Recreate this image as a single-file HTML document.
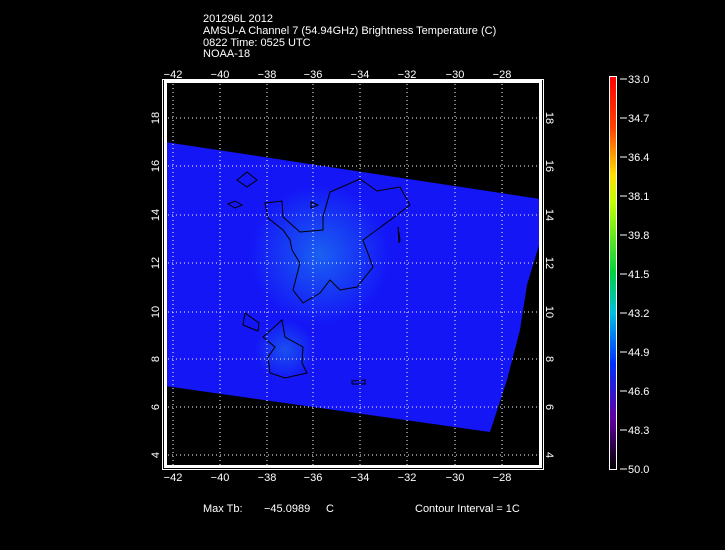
<!DOCTYPE html>
<html><head><style>
html,body{margin:0;padding:0;background:#000;}
svg{display:block;}
text{font-family:"Liberation Sans",sans-serif;fill:#fff;font-size:11px;}
</style></head><body>
<svg width="725" height="550" viewBox="0 0 725 550" xmlns="http://www.w3.org/2000/svg">
<defs>
<radialGradient id="hot" cx="320" cy="255" r="70" gradientUnits="userSpaceOnUse">
<stop offset="0" stop-color="#1a60f2"/><stop offset="1" stop-color="#1a60f2" stop-opacity="0"/>
</radialGradient>
<radialGradient id="hot2" cx="285" cy="350" r="30" gradientUnits="userSpaceOnUse">
<stop offset="0" stop-color="#1a50f0"/><stop offset="1" stop-color="#1a50f0" stop-opacity="0"/>
</radialGradient>
<linearGradient id="cb" x1="0" y1="0" x2="0" y2="1">
<stop offset="0" stop-color="#ff0000"/>
<stop offset="0.13" stop-color="#ff4000"/>
<stop offset="0.25" stop-color="#ffe000"/>
<stop offset="0.32" stop-color="#c0ff00"/>
<stop offset="0.5" stop-color="#00d040"/>
<stop offset="0.6" stop-color="#00c0e0"/>
<stop offset="0.73" stop-color="#0030ff"/>
<stop offset="0.87" stop-color="#6000a0"/>
<stop offset="1" stop-color="#000000"/>
</linearGradient>
</defs>
<text x="203" y="22">201296L 2012</text>
<text x="203" y="34">AMSU-A Channel 7 (54.94GHz) Brightness Temperature (C)</text>
<text x="203" y="46">0822 Time: 0525 UTC</text>
<text x="203" y="57">NOAA-18</text>
<polygon points="165,142 540,199 540,242 527,285 520,330 507,380 490,432 165,386" fill="#1416f6"/>
<polygon points="165,142 540,199 540,242 527,285 520,330 507,380 490,432 165,386" fill="url(#hot)"/>
<polygon points="165,142 540,199 540,242 527,285 520,330 507,380 490,432 165,386" fill="url(#hot2)"/>
<g fill="none" stroke="#000" stroke-width="1">
<path d="M330,192 360,179 377,191 400,187 410,205 393,218 363,240 373,267 357,287 340,290 330,280 320,293 303,303 293,290 300,263 292,250 290,240 283,230 268,218 265,203 282,201 283,217 300,232 323,230 323,217 Z"/>
<path d="M282,320 285,337 303,347 302,363 307,373 285,378 270,373 268,357 275,347 263,337 Z"/>
<path d="M245,313 259,323 258,331 243,325 Z"/>
<path d="M237,180 247,172 257,180 247,187 Z"/>
<path d="M228,204 235,201 242,205 235,208 Z"/>
<path d="M398,227 400,240 399,243 Z"/>
<path d="M352,381 365,380 365,384 352,384 Z"/>
<path d="M311,202 318,205 311,208 Z"/>
</g>
<g stroke="#fff" stroke-width="1" stroke-dasharray="1,3">
<path d="M173,80V465M220,80V465M267,80V465M313,80V465M360,80V465M407,80V465M455,80V465M502,80V465"/>
<path d="M164,118H541M164,166H541M164,215H541M164,263H541M164,312H541M164,359H541M164,407H541M164,455H541"/>
</g>
<rect x="162.5" y="79.5" width="381" height="390" fill="none" stroke="#fff"/>
<rect x="164" y="80" width="377" height="3" fill="#fff"/>
<rect x="164" y="465" width="377" height="3" fill="#fff"/>
<rect x="164" y="80" width="3" height="388" fill="#fff"/>
<rect x="539" y="80" width="3" height="388" fill="#fff"/>
<g text-anchor="middle">
<text x="173" y="78">−42</text><text x="220" y="78">−40</text><text x="267" y="78">−38</text><text x="313" y="78">−36</text><text x="360" y="78">−34</text><text x="407" y="78">−32</text><text x="455" y="78">−30</text><text x="502" y="78">−28</text>
<text x="173" y="481">−42</text><text x="220" y="481">−40</text><text x="267" y="481">−38</text><text x="313" y="481">−36</text><text x="360" y="481">−34</text><text x="407" y="481">−32</text><text x="455" y="481">−30</text><text x="502" y="481">−28</text>
</g>
<g font-size="11">
<text transform="translate(159,118) rotate(-90)" text-anchor="middle">18</text>
<text transform="translate(159,166) rotate(-90)" text-anchor="middle">16</text>
<text transform="translate(159,215) rotate(-90)" text-anchor="middle">14</text>
<text transform="translate(159,263) rotate(-90)" text-anchor="middle">12</text>
<text transform="translate(159,312) rotate(-90)" text-anchor="middle">10</text>
<text transform="translate(159,359) rotate(-90)" text-anchor="middle">8</text>
<text transform="translate(159,407) rotate(-90)" text-anchor="middle">6</text>
<text transform="translate(159,455) rotate(-90)" text-anchor="middle">4</text>
<text transform="translate(546,118) rotate(90)" text-anchor="middle">18</text>
<text transform="translate(546,166) rotate(90)" text-anchor="middle">16</text>
<text transform="translate(546,215) rotate(90)" text-anchor="middle">14</text>
<text transform="translate(546,263) rotate(90)" text-anchor="middle">12</text>
<text transform="translate(546,312) rotate(90)" text-anchor="middle">10</text>
<text transform="translate(546,359) rotate(90)" text-anchor="middle">8</text>
<text transform="translate(546,407) rotate(90)" text-anchor="middle">6</text>
<text transform="translate(546,455) rotate(90)" text-anchor="middle">4</text>
</g>
<rect x="609.5" y="76.5" width="7" height="393" fill="url(#cb)" stroke="#fff"/>
<g stroke="#fff"><path d="M620,79H627M620,118H627M620,157H627M620,196H627M620,235H627M620,274H627M620,313H627M620,352H627M620,391H627M620,430H627M620,469H627"/></g>
<g font-size="11">
<text x="628" y="83">33.0</text><text x="628" y="122">34.7</text><text x="628" y="161">36.4</text><text x="628" y="200">38.1</text><text x="628" y="239">39.8</text><text x="628" y="278">41.5</text><text x="628" y="317">43.2</text><text x="628" y="356">44.9</text><text x="628" y="395">46.6</text><text x="628" y="434">48.3</text><text x="628" y="473">50.0</text>
</g>
<text x="203" y="512">Max Tb:</text>
<text x="264" y="512">−45.0989</text>
<text x="326" y="512">C</text>
<text x="415" y="512">Contour Interval = 1C</text>
</svg>
</body></html>
